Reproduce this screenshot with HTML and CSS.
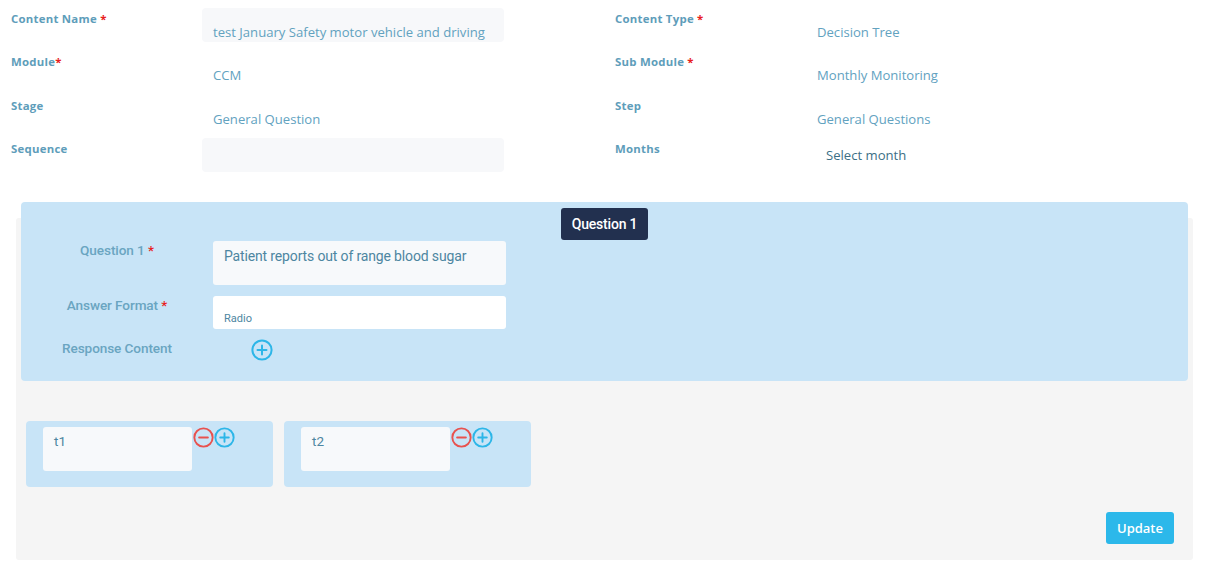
FILE: index.html
```html
<!DOCTYPE html>
<html>
<head>
<meta charset="utf-8">
<link rel="stylesheet" href="styles.css">
</head>
<body>
<div class="top-form">
  <div class="half">
    <div class="field"><div class="lbl">Content Name <span class="req">*</span></div><div class="val boxed">test January Safety motor vehicle and driving</div></div>
    <div class="field"><div class="lbl">Module<span class="req">*</span></div><div class="val">CCM</div></div>
    <div class="field"><div class="lbl">Stage</div><div class="val">General Question</div></div>
    <div class="field"><div class="lbl">Sequence</div><div class="val boxed"></div></div>
  </div>
  <div class="half">
    <div class="field"><div class="lbl">Content Type <span class="req">*</span></div><div class="val">Decision Tree</div></div>
    <div class="field"><div class="lbl">Sub Module <span class="req">*</span></div><div class="val">Monthly Monitoring</div></div>
    <div class="field"><div class="lbl">Step</div><div class="val">General Questions</div></div>
    <div class="field"><div class="lbl">Months</div><div class="val select">Select month</div></div>
  </div>
</div>

<div class="editor">
  <div class="qpanel">
    <div class="badge-row"><span class="badge">Question 1</span></div>
    <div class="qrow q1">
      <div class="qlbl">Question 1 <span class="req">*</span></div>
      <div class="qbox tall">Patient reports out of range blood sugar</div>
    </div>
    <div class="qrow q2">
      <div class="qlbl">Answer Format <span class="req">*</span></div>
      <div class="qbox white">Radio</div>
    </div>
    <div class="qrow q3">
      <div class="qlbl">Response Content</div>
      <svg class="icon add-main" width="22" height="22" viewBox="0 0 22 22"><circle cx="11" cy="11" r="9.6" fill="none" stroke="#2db6e8" stroke-width="2"/><path d="M11 6.5v9M6.5 11h9" stroke="#2db6e8" stroke-width="2" stroke-linecap="round"/></svg>
    </div>
  </div>

  <div class="cards">
    <div class="card">
      <div class="cbox">t1</div>
      <div class="icons">
        <svg class="icon" width="21" height="21" viewBox="0 0 22 22"><circle cx="11" cy="11" r="9.6" fill="none" stroke="#e8524f" stroke-width="2"/><path d="M6.5 11h9" stroke="#e8524f" stroke-width="2.2" stroke-linecap="round"/></svg>
        <svg class="icon" width="21" height="21" viewBox="0 0 22 22"><circle cx="11" cy="11" r="9.6" fill="none" stroke="#2db6e8" stroke-width="2"/><path d="M11 6.5v9M6.5 11h9" stroke="#2db6e8" stroke-width="2" stroke-linecap="round"/></svg>
      </div>
    </div>
    <div class="card">
      <div class="cbox">t2</div>
      <div class="icons">
        <svg class="icon" width="21" height="21" viewBox="0 0 22 22"><circle cx="11" cy="11" r="9.6" fill="none" stroke="#e8524f" stroke-width="2"/><path d="M6.5 11h9" stroke="#e8524f" stroke-width="2.2" stroke-linecap="round"/></svg>
        <svg class="icon" width="21" height="21" viewBox="0 0 22 22"><circle cx="11" cy="11" r="9.6" fill="none" stroke="#2db6e8" stroke-width="2"/><path d="M11 6.5v9M6.5 11h9" stroke="#2db6e8" stroke-width="2" stroke-linecap="round"/></svg>
      </div>
    </div>
  </div>

  <div class="actions"><button class="update">Update</button></div>
</div>
</body>
</html>
```
FILE: styles.css
```css
* { box-sizing: border-box; }
html, body { margin: 0; padding: 0; background: #fff; }
body { font-family: "Open Sans", "DejaVu Sans", sans-serif; color: #5f9fbc; }

.top-form { display: grid; grid-template-columns: 604px 605px; padding-top: 8px; }
.half { display: flex; flex-direction: column; gap: 9.33px; }
.field { display: flex; height: 34px; }
.lbl { width: 202px; padding-left: 11px; padding-top: 3px; font-size: 11.4px; line-height: 15px; font-weight: 700; color: #5e9dba; letter-spacing: 0.25px; }
.req { color: #e81e1e; }
.val { width: 302px; height: 34px; padding: 15px 11px 0; font-size: 13.1px; line-height: 18px; color: #62a2bf; white-space: nowrap; }
.val.boxed { background: #f7f8fa; border-radius: 4px; }
.val.select { padding: 8px 20px 0; color: #3c6f86; }

.editor { margin: 46px 16px 0; background: #f5f5f5; height: 342px; border-radius: 3px; padding: 0 5px; display: flex; flex-direction: column; }
.qpanel { margin-top: -16px; background: #c8e4f7; border-radius: 4px; height: 179px; padding-top: 6px; font-family: Roboto, "Liberation Sans", sans-serif; }
.badge-row { display: flex; justify-content: center; }
.badge { background: #22304f; color: #fff; font-size: 14px; font-weight: 500; height: 32px; width: 87px; border-radius: 3px; display: flex; align-items: center; justify-content: center; letter-spacing: -0.2px; }
.qrow { display: flex; }
.qrow.q1 { margin-top: 1px; }
.qrow.q2 { margin-top: 11px; }
.qrow.q3 { margin-top: 10px; }
.qlbl { width: 192px; text-align: center; font-size: 13.6px; font-weight: 500; color: #6aa5c1; padding-top: 1px; line-height: 16px; letter-spacing: -0.1px; }
.qbox { width: 293px; border-radius: 3px; background: #f7f9fb; color: #4d86a1; padding-left: 11px; }
.qbox.tall { height: 44px; padding-top: 6px; font-size: 14px; line-height: 18px; letter-spacing: -0.15px; }
.qbox.white { background: #fff; height: 33px; font-size: 11px; padding-top: 16px; line-height: 14px; }
.add-main { margin-left: 38px; margin-top: 0; display: block; }

.cards { display: flex; gap: 11px; margin-top: 40px; padding-left: 5px; font-family: Roboto, "Liberation Sans", sans-serif; }
.card { width: 247px; height: 66px; background: #c8e4f7; border-radius: 4px; padding: 6px 0 0 17px; display: flex; align-items: flex-start; }
.cbox { width: 149px; height: 44px; background: #f7f9fb; border-radius: 3px; padding: 6px 11px; font-size: 13.5px; line-height: 16px; color: #4d86a1; }
.icons { display: flex; gap: 0; margin-left: 1px; }
.icon { display: block; }

.actions { display: flex; justify-content: flex-end; margin-top: 25px; padding-right: 14px; }
.update { font-family: "Open Sans", sans-serif; background: #2cb8ea; color: #fff; border: none; border-radius: 3px; width: 68px; height: 32px; font-size: 13px; font-weight: 600; padding: 0; }
```
